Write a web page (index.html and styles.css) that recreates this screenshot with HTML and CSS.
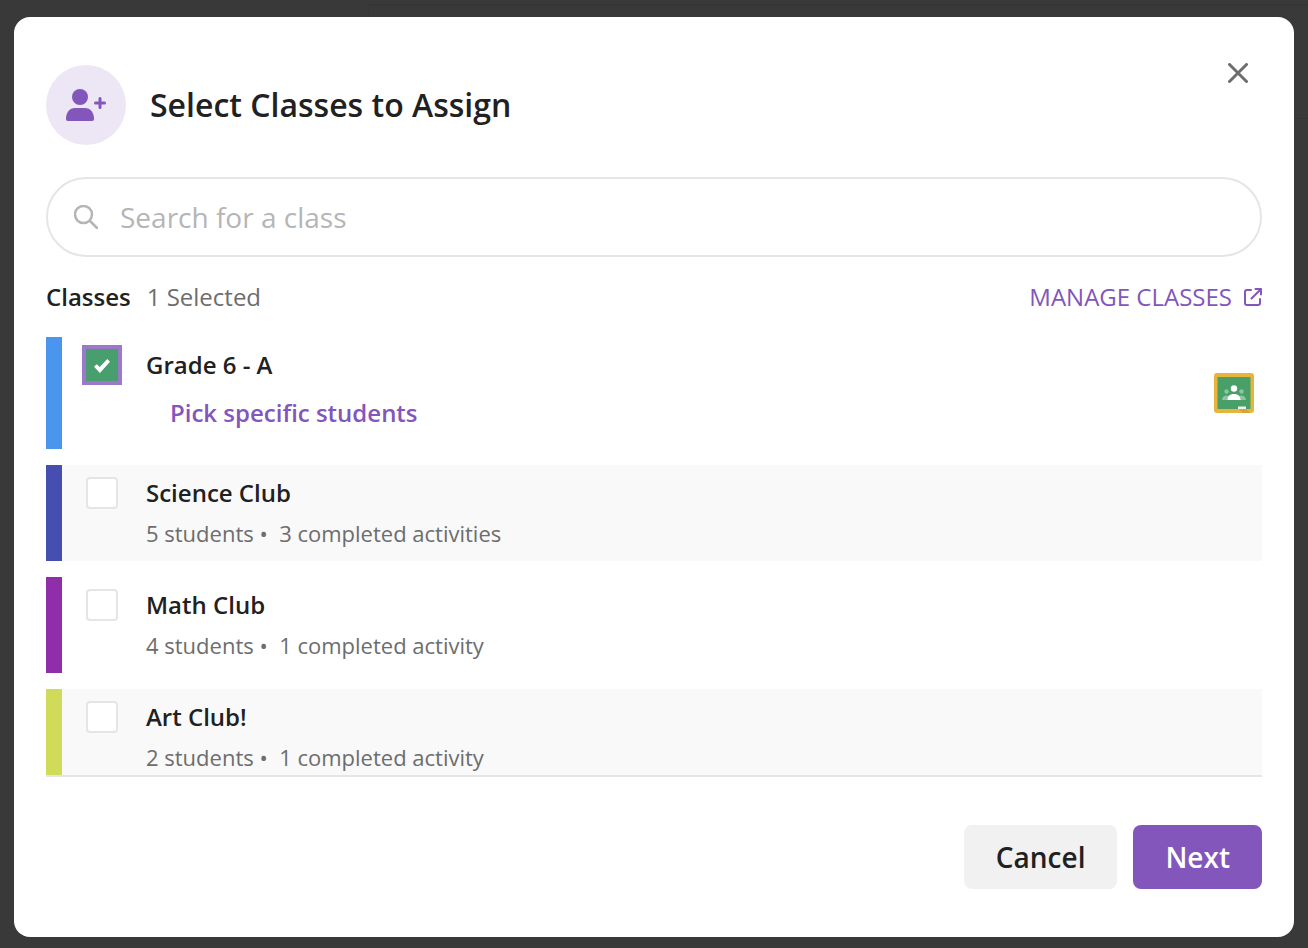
FILE: index.html
```html
<!DOCTYPE html>
<html lang="en">
<head>
  <meta charset="UTF-8">
  <meta name="viewport" content="width=device-width, initial-scale=1.0">
  <title>Select Classes to Assign</title>
  <link rel="stylesheet" href="styles.css">
</head>
<body>
  <div class="backdrop"><div class="backdrop-main"></div></div>

  <div class="modal" role="dialog" aria-labelledby="modal-title">
    <header class="modal-header">
      <span class="modal-icon">
        <svg width="40" height="32" viewBox="0 0 40 32" fill="#8256ba">
          <circle cx="14" cy="8" r="8"/>
          <path d="M9 19h10c5.500 0 9 4.500 9 11 0 1.300-.7 2-2 2H2c-1.300 0-2-.7-2-2 0-6.500 3.500-11 9-11z"/>
          <path d="M34 9.500v9M29.500 14h9" stroke="#8256ba" stroke-width="3" stroke-linecap="round"/>
        </svg>
      </span>
      <h1 id="modal-title">Select Classes to Assign</h1>
      <button class="close" type="button" aria-label="Close">
        <svg width="20" height="20" viewBox="0 0 20 20" fill="none" stroke="#6d6d6d" stroke-width="3" stroke-linecap="round">
          <path d="M1.500 1.500l17 17M18.500 1.500l-17 17"/>
        </svg>
      </button>
    </header>

    <label class="search">
      <svg width="24" height="24" viewBox="0 0 24 24" fill="none" stroke="#b5b5b5" stroke-width="2.500" stroke-linecap="round">
        <circle cx="9.500" cy="9.500" r="8.500"/>
        <path d="M16 16l7 7"/>
      </svg>
      <input type="text" placeholder="Search for a class" aria-label="Search for a class">
    </label>

    <div class="list-header">
      <h2>Classes</h2>
      <span class="selected-count">1 Selected</span>
      <a class="manage" href="#">MANAGE CLASSES
        <svg width="18" height="18" viewBox="0 0 18 18" fill="none" stroke="#8256ba" stroke-width="2" stroke-linecap="round" stroke-linejoin="round">
          <path d="M7 2H3Q1 2 1 4v11q0 2 2 2h11q2 0 2-2v-4M7.500 10.500L17 1M11.500 1H17v5.500"/>
        </svg>
      </a>
    </div>

    <ul class="class-list">
      <li class="class-row blue selected">
        <input type="checkbox" id="grade6" checked>
        <div class="class-info">
          <label for="grade6">Grade 6 - A</label>
          <button class="pick" type="button">Pick specific students</button>
        </div>
        <svg class="classroom" width="40" height="40" viewBox="0 0 40 40">
          <rect width="40" height="40" rx="3" fill="#e8b53c"/>
          <rect x="3.500" y="4" width="33" height="32" fill="#489f67"/>
          <path d="M25 36h7l4 4h-7z" fill="#d9a136"/>
          <g fill="#8cc6a0">
            <circle cx="12.500" cy="18.500" r="2.200"/>
            <circle cx="27.500" cy="18.500" r="2.200"/>
            <path d="M8 27c0-3 2-4.500 4.500-4.500S17 24 17 27zM23 27c0-3 2-4.500 4.500-4.500S32 24 32 27z"/>
          </g>
          <circle cx="20" cy="15.500" r="3.200" fill="#fff"/>
          <path d="M13.500 27c0-4 2.500-6 6.500-6s6.500 2 6.500 6z" fill="#fff"/>
          <path d="M24 33.500h8V36h-8z" fill="#f1f1f1"/>
        </svg>
      </li>
      <li class="class-row indigo shaded">
        <input type="checkbox" id="science">
        <div class="class-info">
          <label for="science">Science Club</label>
          <p>5 students •&nbsp; 3 completed activities</p>
        </div>
      </li>
      <li class="class-row violet">
        <input type="checkbox" id="math">
        <div class="class-info">
          <label for="math">Math Club</label>
          <p>4 students •&nbsp; 1 completed activity</p>
        </div>
      </li>
      <li class="class-row lime shaded">
        <input type="checkbox" id="art">
        <div class="class-info">
          <label for="art">Art Club!</label>
          <p>2 students •&nbsp; 1 completed activity</p>
        </div>
      </li>
    </ul>

    <footer class="modal-footer">
      <button class="btn" type="button">Cancel</button>
      <button class="btn primary" type="button">Next</button>
    </footer>
  </div>
</body>
</html>
```
FILE: styles.css
```css
* {
  box-sizing: border-box;
  margin: 0;
  padding: 0;
}

body {
  display: flex;
  height: 100vh;
  padding: 17px 14px 11px;
  background-color: #393939;
  color: #212121;
  font-family: "Open Sans", "Noto Sans", sans-serif;
}

button,
input {
  font-family: inherit;
}

button {
  border: none;
  cursor: pointer;
}

svg {
  display: block;
  flex-shrink: 0;
}

/* dimmed page behind the dialog */
.backdrop {
  position: fixed;
  inset: 0;
  z-index: -1;
  padding: 4px 0 0 368px;
}

.backdrop-main {
  height: 115px;
  border: solid #353535;
  border-width: 2px 0 1px 1px;
}

.modal {
  flex: 1;
  display: flex;
  flex-direction: column;
  min-width: 0;
  padding: 48px 32px;
  border-radius: 16px;
  background-color: #fff;
}

.modal-header {
  display: flex;
  align-items: center;
  gap: 24px;
  margin-bottom: 32px;
}

.modal-icon {
  display: flex;
  align-items: center;
  justify-content: center;
  width: 80px;
  height: 80px;
  border-radius: 50%;
  background-color: #ece6f5;
}

h1 {
  font-size: 32px;
  font-weight: 600;
  line-height: 40px;
}

.close {
  align-self: flex-start;
  display: flex;
  align-items: center;
  justify-content: center;
  width: 48px;
  height: 16px;
  margin-left: auto;
  background: none;
}

.search {
  display: flex;
  align-items: center;
  flex-shrink: 0;
  gap: 22px;
  height: 80px;
  padding: 0 26px;
  border: 2px solid #e5e5e5;
  border-radius: 40px;
}

.search input {
  flex: 1;
  border: none;
  outline: none;
  background: none;
  color: #212121;
  font-size: 28px;
}

.search input::placeholder {
  color: #b5b5b5;
}

.list-header {
  display: flex;
  align-items: center;
  gap: 16px;
  margin: 24px 0;
  font-size: 24px;
  line-height: 32px;
}

h2 {
  font-size: 24px;
  font-weight: 600;
}

.selected-count {
  color: #6d6d6d;
}

.manage {
  display: flex;
  align-items: center;
  gap: 12px;
  margin-left: auto;
  color: #8256ba;
  text-decoration: none;
}

.class-list {
  flex: 1;
  display: flex;
  flex-direction: column;
  gap: 16px;
  min-height: 0;
  overflow-y: auto;
  scrollbar-width: none;
  border-bottom: 2px solid #e5e5e5;
  list-style: none;
}

.class-row {
  display: flex;
  flex-shrink: 0;
  gap: 28px;
  min-height: 96px;
  padding: 12px 8px 12px 24px;
  border-left: 16px solid;
}

.shaded {
  background-color: #f9f9f9;
}

.selected {
  min-height: 112px;
}

.blue { border-color: #4a95ed; }
.indigo { border-color: #444fb0; }
.violet { border-color: #902dab; }
.lime { border-color: #d0dc59; }

.class-row input {
  appearance: none;
  flex-shrink: 0;
  width: 32px;
  height: 32px;
  border: 2px solid #e5e5e5;
  border-radius: 4px;
  background-color: #fff;
}

.class-row input:checked {
  display: flex;
  align-items: center;
  justify-content: center;
  padding-top: 2px;
  border: none;
  border-radius: 0;
  outline: 4px solid #9b78c8;
  background-color: #489f6d;
}

/* tick */
.class-row input:checked::before {
  content: "";
  width: 16px;
  height: 14px;
  background-color: #fff;
  clip-path: polygon(0 55%, 17% 38%, 36% 58%, 83% 0, 100% 20%, 37% 100%);
}

.class-info {
  flex: 1;
}

.class-info label {
  display: block;
  font-size: 24px;
  font-weight: 600;
  line-height: 32px;
}

.class-info p {
  margin-top: 8px;
  color: #6d6d6d;
  font-size: 22px;
  line-height: 32px;
}

.pick {
  margin: 16px 0 0 24px;
  background: none;
  color: #8256ba;
  font-size: 24px;
  font-weight: 600;
  line-height: 32px;
}

.classroom {
  align-self: center;
}

.modal-footer {
  display: flex;
  justify-content: flex-end;
  gap: 16px;
  margin-top: 48px;
}

.btn {
  height: 64px;
  padding: 0 32px;
  border-radius: 8px;
  background-color: #f1f1f1;
  color: #212121;
  font-size: 28px;
  font-weight: 600;
}

.primary {
  background-color: #8256ba;
  color: #fff;
}
```
